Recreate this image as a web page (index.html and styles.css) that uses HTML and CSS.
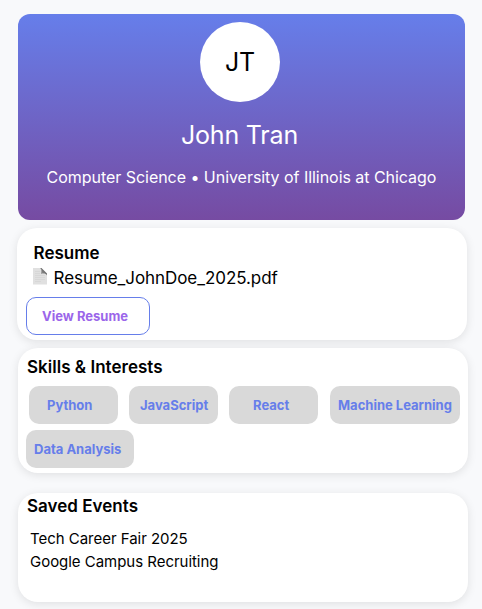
FILE: index.html
```html
<!DOCTYPE html>
<html lang="en">
<head>
<meta charset="utf-8">
<title>Profile</title>
<link rel="stylesheet" href="styles.css">
</head>
<body>
<main class="page">
  <header class="hero">
    <div class="avatar">JT</div>
    <h1 class="name">John Tran</h1>
    <p class="subtitle">Computer Science • University of Illinois at Chicago</p>
  </header>

  <section class="card resume">
    <h2 class="title">Resume</h2>
    <p class="file">
      <svg class="file-icon" width="15" height="17" viewBox="0 0 15 17">
        <defs>
          <linearGradient id="fold" x1="0" y1="1" x2="1" y2="0">
            <stop offset="0" stop-color="#aaa"/>
            <stop offset=".5" stop-color="#777"/>
            <stop offset="1" stop-color="#555"/>
          </linearGradient>
        </defs>
        <path d="M0 0H8L14 6V16.500H0Z" fill="#e0e0e0"/>
        <path d="M2 3.500H7M2 5.500H7M2 7.500H12M2 9.500H12M2 11.500H12M2 13.500H8" stroke="#d2d2d2" stroke-width=".7"/>
        <path d="M7 0C9 1 8.500 4 8 6C10.500 5 13 5.500 14 7.500V5.500L8.500 0Z" fill="url(#fold)"/>
      </svg>
      <span>Resume_JohnDoe_2025.pdf</span>
    </p>
    <button class="view">View Resume</button>
  </section>

  <section class="card skills">
    <h2 class="title">Skills &amp; Interests</h2>
    <div class="chips">
      <span class="chip python">Python</span>
      <span class="chip javascript">JavaScript</span>
      <span class="chip react">React</span>
      <span class="chip learning">Machine Learning</span>
    </div>
    <div class="chips second">
      <span class="chip analysis">Data Analysis</span>
    </div>
  </section>

  <section class="card events">
    <h2 class="title">Saved Events</h2>
    <ul class="event-list">
      <li>Tech Career Fair 2025</li>
      <li>Google Campus Recruiting</li>
    </ul>
  </section>
</main>
</body>
</html>
```
FILE: styles.css
```css
* {
  box-sizing: border-box;
  margin: 0;
  padding: 0;
}

body {
  background: #f8f9fb;
  color: #000;
  font-family: Inter, "Liberation Sans", sans-serif;
  overflow: hidden;
}

.page {
  display: flex;
  flex-direction: column;
  width: 482px;
  height: 609px;
  padding: 14px 14px 0 18px;
  white-space: nowrap;
}

.hero {
  display: flex;
  flex-direction: column;
  align-items: center;
  width: 447px;
  height: 206px;
  padding-top: 8px;
  border-radius: 12px;
  background: linear-gradient(#667eea, #764ba2);
  color: #fff;
}

.avatar {
  width: 80px;
  height: 80px;
  margin-right: 3px;
  border-radius: 50%;
  background: #fff;
  color: #000;
  font-size: 25px;
  letter-spacing: -0.2px;
  line-height: 80px;
  text-align: center;
}

.name {
  margin: 18px 4px 0 0;
  font-size: 25px;
  font-weight: 400;
  letter-spacing: -0.2px;
  line-height: 30px;
}

.subtitle {
  margin-top: 17px;
  font-size: 16px;
  font-weight: 400;
  letter-spacing: -0.04px;
  line-height: 20px;
}

.card {
  width: 450px;
  border-radius: 20px;
  background: #fff;
  box-shadow: 0 2px 10px rgba(0, 0, 0, 0.1);
}

.title {
  font-size: 17px;
  font-weight: 600;
  letter-spacing: 0.02px;
  line-height: 20px;
}

.resume {
  height: 112px;
  margin: 8px 0 0 -1px;
  padding: 15px 0 0 9px;
}

.resume .title {
  padding-left: 7.5px;
}

.file {
  display: flex;
  align-items: center;
  gap: 5.5px;
  height: 20px;
  margin-top: 5px;
  padding-left: 7px;
  font-size: 17px;
  letter-spacing: -0.06px;
  line-height: 20px;
}

.file-icon {
  margin-top: -3px;
}

.view {
  display: block;
  width: 124px;
  height: 38px;
  margin-top: 9px;
  padding-left: 15px;
  border: 1px solid #667eea;
  border-radius: 10px;
  background: #fff;
  color: #9b66ea;
  font: 700 13px/36px Inter, "Liberation Sans", sans-serif;
  text-align: left;
}

.skills {
  height: 125px;
  margin-top: 8px;
  padding: 9px 8px 0 9px;
}

.chips {
  display: grid;
  grid-template-columns: 89px 89px 89px 130px;
  column-gap: 11px;
  margin: 9px 0 0 2px;
}

.chips.second {
  grid-template-columns: 108px;
  margin: 6px 0 0 -1px;
}

.chip {
  height: 38px;
  border-radius: 10px;
  background: #d9d9d9;
  color: #667eea;
  font-size: 13px;
  font-weight: 700;
  line-height: 38px;
}

.python {
  padding-left: 18px;
}

.javascript {
  padding-left: 11px;
}

.react {
  padding-left: 24px;
}

.learning {
  margin-left: 1px;
  margin-right: -1px;
  padding-left: 8px;
}

.analysis {
  padding-left: 8px;
}

.events {
  height: 109px;
  margin-top: 20px;
  padding: 3px 9px 0;
}

.event-list {
  margin-top: 11px;
  padding-left: 3px;
  font-size: 15px;
  letter-spacing: -0.03px;
  line-height: 23px;
  list-style: none;
}
```
